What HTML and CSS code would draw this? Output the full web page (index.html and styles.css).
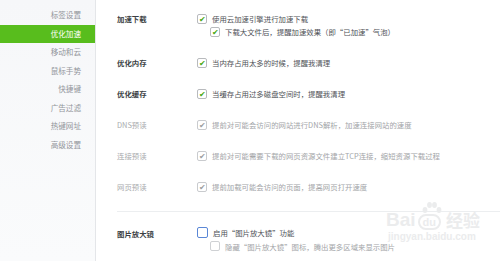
FILE: index.html
```html
<!DOCTYPE html>
<html lang="zh-CN">
<head>
    <meta charset="UTF-8">
    <title>设置 - 优化加速</title>
    <link rel="stylesheet" href="styles.css">
</head>
<body>
    <div class="window">
        <!-- 左侧菜单 -->
        <ul class="side-menu">
            <li>标签设置</li>
            <li class="active">优化加速</li>
            <li>移动和云</li>
            <li>鼠标手势</li>
            <li>快捷键</li>
            <li>广告过滤</li>
            <li>热键网址</li>
            <li>高级设置</li>
        </ul>

        <!-- 设置内容 -->
        <div class="content">
            <div class="section first">
                <div class="label">加速下载</div>
                <div class="options">
                    <div class="option"><span class="box checked"></span>使用云加速引擎进行加速下载</div>
                    <div class="option sub"><span class="box checked"></span>下载大文件后，提醒加速效果（即“已加速”气泡）</div>
                </div>
            </div>
            <div class="section">
                <div class="label">优化内存</div>
                <div class="options">
                    <div class="option"><span class="box checked"></span>当内存占用太多的时候，提醒我清理</div>
                </div>
            </div>
            <div class="section">
                <div class="label">优化缓存</div>
                <div class="options">
                    <div class="option"><span class="box checked"></span>当缓存占用过多磁盘空间时，提醒我清理</div>
                </div>
            </div>
            <div class="section disabled">
                <div class="label">DNS预读</div>
                <div class="options">
                    <div class="option"><span class="box checked"></span>提前对可能会访问的网站进行DNS解析，加速连接网站的速度</div>
                </div>
            </div>
            <div class="section disabled">
                <div class="label">连接预读</div>
                <div class="options">
                    <div class="option"><span class="box checked"></span>提前对可能需要下载的网页资源文件建立TCP连接，缩短资源下载过程</div>
                </div>
            </div>
            <div class="section disabled">
                <div class="label">网页预读</div>
                <div class="options">
                    <div class="option"><span class="box checked"></span>提前加载可能会访问的页面，提高网页打开速度</div>
                </div>
            </div>

            <div class="divider"></div>

            <div class="section last">
                <div class="label">图片放大镜</div>
                <div class="options">
                    <div class="option"><span class="box focus"></span>启用“图片放大镜”功能</div>
                    <div class="option sub muted"><span class="box"></span>隐藏“图片放大镜”图标，腾出更多区域来显示图片</div>
                </div>
            </div>
        </div>

        <!-- 水印 -->
        <div class="watermark">
            <div class="wm-logo">
                <span class="wm-bai">Bai</span>
                <span class="wm-du">
                    <svg class="wm-paw" width="22" height="14" viewBox="0 0 22 14">
                        <ellipse cx="4" cy="9" rx="2.4" ry="3"/>
                        <ellipse cx="8.5" cy="4" rx="2.4" ry="3"/>
                        <ellipse cx="13.5" cy="4" rx="2.4" ry="3"/>
                        <ellipse cx="18" cy="9" rx="2.4" ry="3"/>
                    </svg>
                    du
                </span>
                <span class="wm-jy">经验</span>
            </div>
            <div class="wm-url">jingyan.baidu.com</div>
        </div>
    </div>
</body>
</html>
```

FILE: styles.css
```css
* {
    box-sizing: border-box;
}
html, body {
    margin: 0;
    padding: 0;
    background: #fff;
}
body {
    font-family: "Noto Sans CJK SC", "Noto Sans", sans-serif;
    font-size: 7.4px;
    color: #555;
}
.window {
    position: relative;
    display: flex;
    width: 500px;
    height: 261px;
    overflow: hidden;
}
.side-menu {
    list-style: none;
    margin: 0;
    padding: 6px 0 0 0;
    width: 96px;
    flex-shrink: 0;
    background: linear-gradient(#f6f7f9, #fafbfc);
    border-right: 1px solid #e4e6e9;
}
.side-menu li {
    height: 18.5px;
    line-height: 18.5px;
    text-align: right;
    padding-right: 14px;
    font-size: 7.6px;
    color: #92959a;
}
.side-menu li.active {
    background: #58bd1d;
    color: #fff;
}
.content {
    flex: 1;
    padding: 12px 20px 0 21px;
}
.section {
    display: flex;
    margin-bottom: 18px;
}
.section.last {
    margin-bottom: 0;
}
.label {
    width: 80px;
    flex-shrink: 0;
    height: 13px;
    line-height: 13px;
    font-weight: bold;
    color: #3c3f44;
}
.section.last .label {
    line-height: 15px;
}
.option {
    display: flex;
    align-items: center;
    height: 13px;
    white-space: nowrap;
    color: #4f5257;
}
.option.sub {
    padding-left: 13px;
}
.section.last .option.sub {
    height: 14px;
}
.section.disabled .label {
    font-weight: normal;
    color: #a9abae;
}
.section.disabled .option,
.option.muted {
    color: #a3a5a8;
}
.box {
    position: relative;
    display: inline-block;
    width: 10px;
    height: 10px;
    margin-right: 5px;
    border: 1px solid #b8babd;
    border-radius: 2px;
    background: #fff;
}
.box.checked::after {
    content: "✔";
    position: absolute;
    left: 1px;
    top: -2px;
    font-size: 8px;
    line-height: 12px;
    color: #48a812;
}
.section.disabled .box {
    border-color: #c9cbce;
}
.section.disabled .box.checked::after {
    color: #9c9ea1;
}
.box.focus {
    width: 11px;
    height: 11px;
    border-color: #5a87d6;
}
.option.muted .box {
    border-color: #cfd1d4;
}
.divider {
    height: 1px;
    background: #eceef0;
    margin: 16px 0 14px 0;
    margin-right: -20px;
}
.watermark {
    position: absolute;
    left: 386px;
    top: 210px;
    color: #ebeced;
    font-family: "Liberation Sans", Arial, sans-serif;
}
.wm-logo {
    display: flex;
    align-items: flex-end;
    gap: 2px;
}
.wm-bai {
    font-size: 19px;
    font-weight: bold;
    line-height: 20px;
}
.wm-du {
    position: relative;
    display: inline-block;
    padding: 0 3px;
    border: 2px solid #ebeced;
    border-radius: 8px;
    font-size: 11px;
    font-weight: bold;
    line-height: 12px;
}
.wm-paw {
    position: absolute;
    left: 1px;
    top: -15px;
    fill: #ebeced;
}
.wm-jy {
    font-family: "Noto Sans CJK SC", sans-serif;
    font-size: 17px;
    font-weight: bold;
    line-height: 20px;
    margin-left: 3px;
}
.wm-url {
    font-size: 10px;
    font-weight: bold;
    margin-top: 1px;
    margin-left: 2px;
}
```
